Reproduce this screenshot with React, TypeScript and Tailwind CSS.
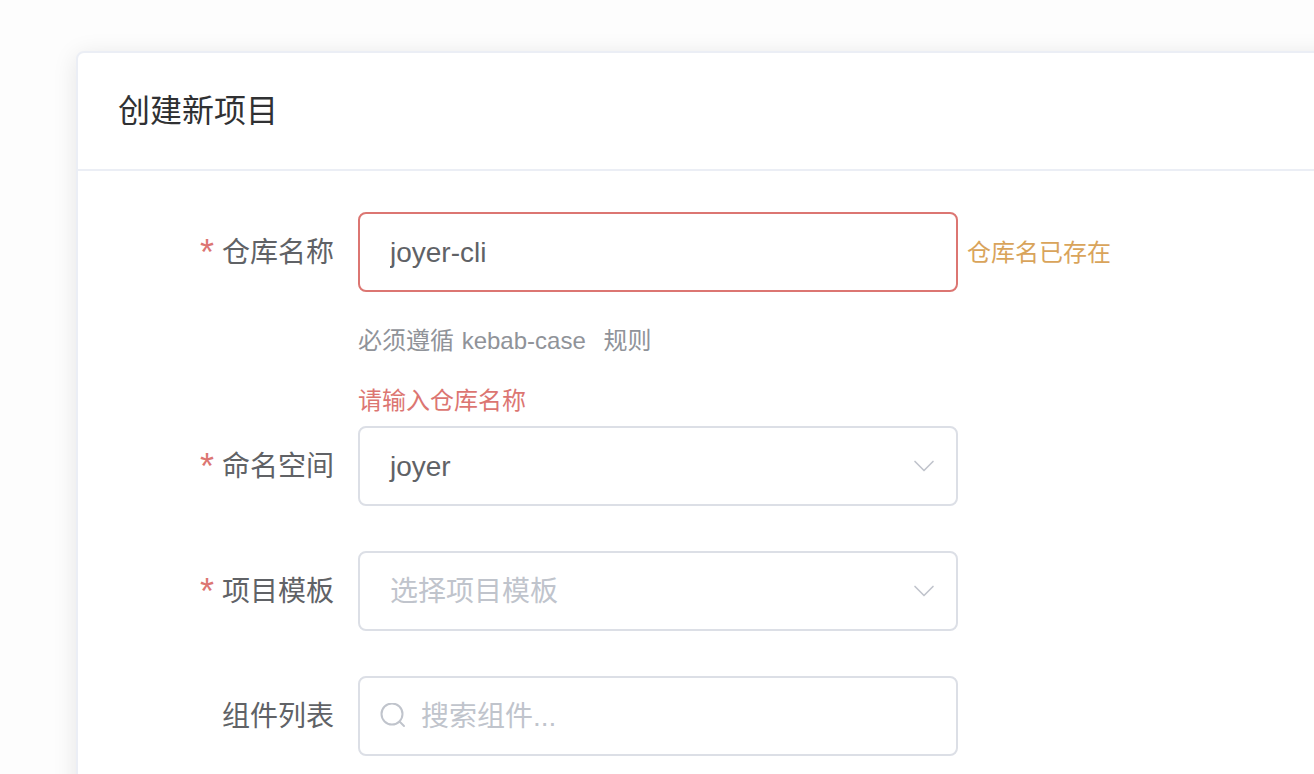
import { ChevronDown } from "lucide-react";
import type { ReactNode } from "react";

const FieldRow = ({
  label,
  required,
  children,
}: {
  label: string;
  required?: boolean;
  children: ReactNode;
}) => (
  <div className="flex items-start">
    <label className="flex h-[80px] w-[280px] shrink-0 items-center justify-end pr-[24px] pt-[2px] text-[28px] text-[#606266]">
      {required && <span className="mb-px mr-[8px] text-[36px] leading-none text-[#dc7672]">*</span>}
      {label}
    </label>
    {children}
  </div>
);

const SelectBox = ({ value, placeholder }: { value?: string; placeholder?: string }) => (
  <div className="flex h-[80px] w-[600px] items-center justify-between rounded-[8px] border-2 border-[#dcdfe6] bg-white pl-[30px] pr-[14px] text-[28px]">
    <span className={value ? "pt-[2px] text-[#606266]" : "pt-[2px] text-[#c0c4cc]"}>{value ?? placeholder}</span>
    <ChevronDown className="h-[36px] w-[36px] text-[#c0c4cc]" strokeWidth={1.1} />
  </div>
);

export default function App() {
  return (
    <div
      className="h-[774px] w-[1314px] overflow-hidden bg-[#fdfdfd] pl-[76px] pt-[51px]"
      style={{ fontFamily: '"Liberation Sans", "Noto Sans CJK SC", sans-serif' }}
    >
      <div className="w-[1400px] rounded-[8px] border-2 border-[#ebeef5] bg-white pb-[60px] shadow-[0_4px_24px_rgba(0,0,0,0.1)]">
        <div className="flex h-[118px] items-center border-b-2 border-[#ebeef5] pl-[40px] text-[32px] text-[#303133]">
          创建新项目
        </div>

        <div className="flex flex-col pt-[41px]">
          <FieldRow label="仓库名称" required>
            <div className="w-[600px]">
              <input
                readOnly
                value="joyer-cli"
                className="h-[80px] w-full rounded-[8px] border-2 border-[#dc7672] bg-white px-[30px] pt-[2px] text-[28px] text-[#606266] outline-none"
              />
              <p className="mt-[32px] text-[24px] leading-[34px] text-[#909399]">
                必须遵循 <span className="ml-px">kebab-case</span> <span className="ml-[11px]">规则</span>
              </p>
              <p className="mt-[26px] h-[42px] text-[24px] leading-[34px] text-[#dc7672]">请输入仓库名称</p>
            </div>
            <span className="ml-[9px] flex h-[80px] items-center pt-[2px] text-[24px] text-[#d9a45b]">仓库名已存在</span>
          </FieldRow>

          <div className="flex flex-col gap-[45px]">
            <FieldRow label="命名空间" required>
              <SelectBox value="joyer" />
            </FieldRow>

            <FieldRow label="项目模板" required>
              <SelectBox placeholder="选择项目模板" />
            </FieldRow>

            <FieldRow label="组件列表">
              <div className="flex h-[80px] w-[600px] items-center rounded-[8px] border-2 border-[#dcdfe6] bg-white pl-[20px] text-[28px]">
                <svg width="26" height="26" viewBox="0 0 26 26" fill="none" stroke="#c0c4cc" strokeWidth="2">
                  <circle cx="12" cy="11" r="10.5" />
                  <path d="M19.5 18.5 L24 23" strokeLinecap="round" />
                </svg>
                <input
                  readOnly
                  placeholder="搜索组件..."
                  className="ml-[15px] flex-1 bg-transparent pt-[2px] text-[28px] outline-none placeholder:text-[#c0c4cc]"
                />
              </div>
            </FieldRow>
          </div>
        </div>
      </div>
    </div>
  );
}
